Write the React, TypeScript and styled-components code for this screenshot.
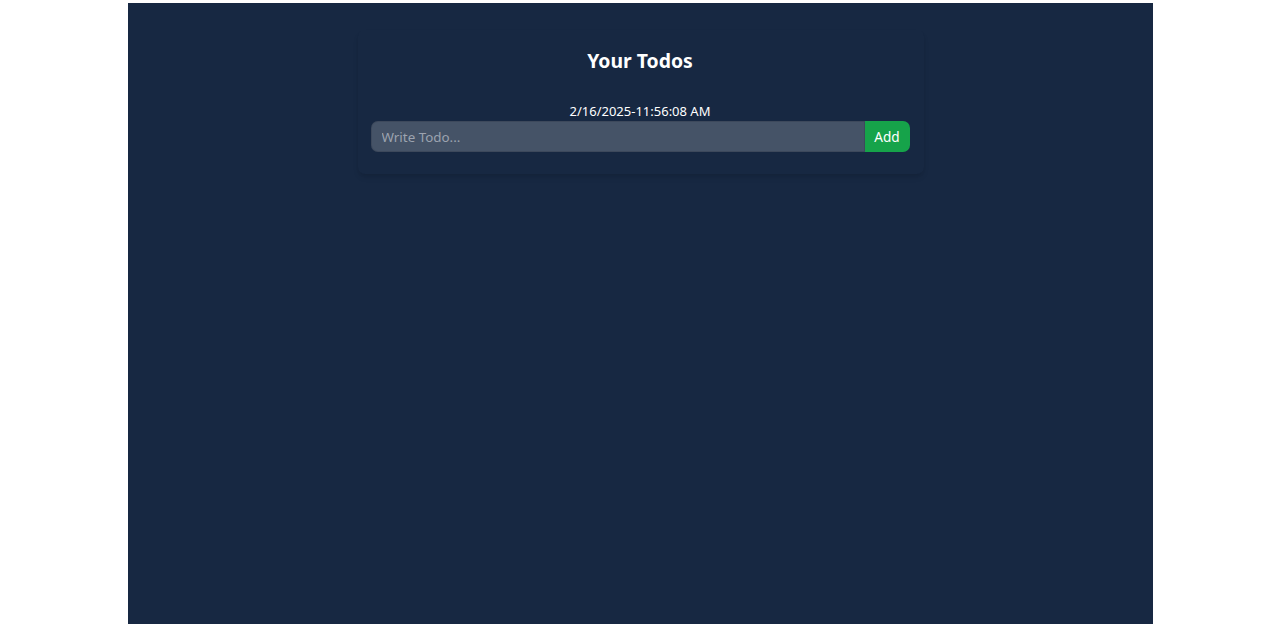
import React from "react";
import styled, { createGlobalStyle } from "styled-components";

const Global = createGlobalStyle`
  html, body { margin: 0; padding: 0; background: #ffffff; }
  body { font-family: "Noto Sans", "Open Sans", sans-serif; }
  * { box-sizing: border-box; }
`;

const Page = styled.div`
  padding-top: 3px;
  background: #ffffff;
  height: 624px;
  overflow: hidden;
`;

const Main = styled.main`
  margin-left: 128px;
  width: 1025px;
  min-height: 621px;
  background: #172842;
  padding-top: 27px;
`;

const Card = styled.section`
  width: 566px;
  margin: 0 auto;
  padding: 10px 14px 22px 13px;
  border-radius: 7px;
  color: #ffffff;
  box-shadow: 0 4px 6px -1px rgba(0, 0, 0, 0.1), 0 2px 4px -2px rgba(0, 0, 0, 0.1);
`;

const Title = styled.h1`
  margin: 7px 0 27px;
  font-size: 19.4px;
  line-height: 27px;
  font-weight: 700;
  text-align: center;
`;

const Stamp = styled.div`
  font-size: 13px;
  line-height: 20px;
  text-align: center;
`;

const Form = styled.form`
  display: flex;
`;

const Input = styled.input`
  flex: 1;
  height: 31px;
  padding: 0 10px;
  border: 1px solid rgba(0, 0, 0, 0.1);
  border-radius: 7px 0 0 7px;
  background: rgba(255, 255, 255, 0.2);
  color: #ffffff;
  font-family: inherit;
  font-size: 13.4px;
  outline: none;
  &::placeholder { color: #9ca3af; }
`;

const AddButton = styled.button`
  flex-shrink: 0;
  width: 45px;
  height: 31px;
  border: none;
  border-radius: 0 7px 7px 0;
  background: #16a34a;
  color: #ffffff;
  font-family: inherit;
  font-size: 13.6px;
  cursor: pointer;
`;

export default function App() {
  return (
    <>
      <Global />
      <Page>
        <Main>
          <Card>
            <Title>Your Todos</Title>
            <Stamp>2/16/2025-11:56:08 AM</Stamp>
            <Form onSubmit={(e) => e.preventDefault()}>
              <Input placeholder="Write Todo..." />
              <AddButton type="submit">Add</AddButton>
            </Form>
          </Card>
        </Main>
      </Page>
    </>
  );
}
